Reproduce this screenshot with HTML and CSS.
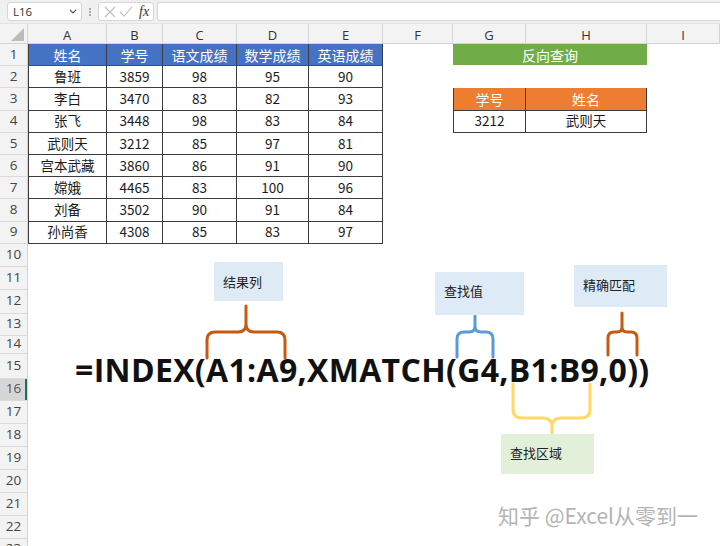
FILE: index.html
```html
<!DOCTYPE html>
<html lang="zh-CN">
<head>
<meta charset="utf-8">
<title>INDEX XMATCH 反向查询</title>
<link rel="stylesheet" href="styles.css">
</head>
<body>
<div class="app">
  <div class="toolbar">
    <div class="namebox">
      <span class="ref">L16</span>
      <svg class="chev" width="8" height="5" viewBox="0 0 8 5"><path d="M1 1 L4 4 L7 1" fill="none" stroke="#555" stroke-width="1.1"/></svg>
    </div>
    <svg class="grip" width="4" height="10" viewBox="0 0 4 10"><circle cx="2" cy="2" r="0.9" fill="#888"/><circle cx="2" cy="5" r="0.9" fill="#888"/><circle cx="2" cy="8" r="0.9" fill="#888"/></svg>
    <div class="fbtns">
      <svg width="12" height="12" viewBox="0 0 12 12"><path d="M1 1 L11 11 M11 1 L1 11" stroke="#bdbdbd" stroke-width="1.1" fill="none"/></svg>
      <svg width="14" height="12" viewBox="0 0 14 12"><path d="M1 6 L5 10 L13 1" stroke="#bdbdbd" stroke-width="1.1" fill="none"/></svg>
      <span class="fx">fx</span>
    </div>
    <div class="finput"></div>
  </div>

  <div class="sheet">
    <div class="corner"><svg width="14" height="13" viewBox="0 0 14 13"><path d="M13 0 L13 13 L0 13 Z" fill="#bcbcbc"/></svg></div>
    <div class="colheads">
      <div class="ch">A</div><div class="ch">B</div><div class="ch">C</div><div class="ch">D</div><div class="ch">E</div><div class="ch">F</div><div class="ch">G</div><div class="ch">H</div><div class="ch">I</div>
    </div>
    <div class="rowheads">
      <div class="rh">1</div><div class="rh">2</div><div class="rh">3</div><div class="rh">4</div><div class="rh">5</div><div class="rh">6</div><div class="rh">7</div><div class="rh">8</div><div class="rh">9</div><div class="rh">10</div><div class="rh">11</div><div class="rh">12</div><div class="rh">13</div><div class="rh">14</div><div class="rh">15</div><div class="rh sel">16</div><div class="rh">17</div><div class="rh">18</div><div class="rh">19</div><div class="rh">20</div><div class="rh">21</div><div class="rh">22</div><div class="rh">23</div>
    </div>
    <div class="canvas">
      <div class="grid">
        <div class="dt">
          <div class="h">姓名</div><div class="h">学号</div><div class="h">语文成绩</div><div class="h">数学成绩</div><div class="h">英语成绩</div>
          <div>鲁班</div><div>3859</div><div>98</div><div>95</div><div>90</div>
          <div>李白</div><div>3470</div><div>83</div><div>82</div><div>93</div>
          <div>张飞</div><div>3448</div><div>98</div><div>83</div><div>84</div>
          <div>武则天</div><div>3212</div><div>85</div><div>97</div><div>81</div>
          <div>宫本武藏</div><div>3860</div><div>86</div><div>91</div><div>90</div>
          <div>嫦娥</div><div>4465</div><div>83</div><div>100</div><div>96</div>
          <div>刘备</div><div>3502</div><div>90</div><div>91</div><div>84</div>
          <div>孙尚香</div><div>4308</div><div>85</div><div>83</div><div>97</div>
        </div>
        <div class="banner">反向查询</div>
        <div class="lookup">
          <div class="h">学号</div><div class="h">姓名</div>
          <div>3212</div><div>武则天</div>
        </div>
      </div>
    </div>
  </div>

  <svg class="braces" width="720" height="546" viewBox="0 0 720 546">
    <g fill="none" stroke-width="3" stroke-linecap="round" stroke-linejoin="round">
      <path stroke="#c55a11" d="M207 358 V340 Q207 332 215 332 H238 Q246 332 246 324 V306 M285 358 V340 Q285 332 277 332 H254 Q246 332 246 324"/>
      <path stroke="#5b9bd5" d="M457 357 V339 Q457 332 464 332 H469 Q475 332 475 326 V316 M493 357 V339 Q493 332 486 332 H481 Q475 332 475 326"/>
      <path stroke="#c55a11" d="M608 355 V338 Q608 332 614 332 H617 Q622 332 622 327 V313 M637 355 V338 Q637 332 631 332 H627 Q622 332 622 327"/>
      <path stroke="#ffd966" d="M513 384 V409 Q513 418 522 418 H543 Q552 418 552 427 V433 M590 384 V409 Q590 418 581 418 H561 Q552 418 552 427"/>
    </g>
  </svg>

  <div class="formula">=INDEX(A1:A9,XMATCH(G4,B1:B9,0))</div>

  <div class="note blue n1">结果列</div>
  <div class="note blue n2">查找值</div>
  <div class="note blue n3">精确匹配</div>
  <div class="note green n4">查找区域</div>

  <div class="watermark">知乎 @Excel从零到一</div>
</div>
</body>
</html>
```

FILE: styles.css
```css
* { box-sizing: border-box; }
html, body { margin: 0; padding: 0; background: #fff; }
body { font-family: "Noto Sans CJK SC", "Noto Sans", sans-serif; color: #222; }

.app { position: relative; width: 720px; height: 546px; overflow: hidden; background: #fff; }

/* toolbar */
.toolbar {
  height: 24px;
  background: #f0f0f0;
  display: flex;
  align-items: flex-start;
  padding: 2px 0 0 7px;
  border-bottom: 1px solid #e2e2e2;
}
.namebox {
  width: 75px; height: 19px;
  background: #fff;
  border: 1px solid #d6d6d6;
  border-radius: 3px;
  display: flex; align-items: center; justify-content: space-between;
  padding: 0 4px 0 5px;
}
.ref { font-family: "Open Sans", sans-serif; font-size: 11.5px; color: #333; line-height: 1; }
.grip { margin: 5px 0 0 6px; }
.fbtns {
  margin-left: 6px;
  width: 56px; height: 19px;
  background: #fff;
  border: 1px solid #d6d6d6;
  border-radius: 3px;
  display: flex; align-items: center;
  padding: 0 0 0 5px; gap: 3px;
}
.fx { font-family: "Liberation Serif", serif; font-style: italic; font-size: 14px; color: #333; margin-left: 3px; line-height: 1; }
.finput {
  margin-left: 3px;
  flex: 1; height: 19px;
  background: #fff;
  border: 1px solid #d6d6d6;
  border-right: none;
  border-radius: 3px 0 0 3px;
}

/* sheet */
.sheet {
  display: grid;
  grid-template-columns: 28px 1fr;
  grid-template-rows: 20px 1fr;
  height: 522px;
}
.corner {
  background: #f3f3f3;
  border-right: 1px solid #d4d4d4;
  border-bottom: 1px solid #d4d4d4;
  display: flex; align-items: flex-end; justify-content: flex-end;
  padding: 0 2px 2px 0;
}
.colheads {
  display: grid;
  grid-template-columns: 79px 56px 74px 72px 74px 70px 73px 121px 1fr;
  background: #f3f3f3;
  border-bottom: 1px solid #d4d4d4;
}
.ch {
  border-right: 1px solid #d4d4d4;
  display: flex; align-items: center; justify-content: center;
  font-family: "Open Sans", sans-serif; font-size: 13px; color: #333;
  padding-top: 3px;
  line-height: 1;
}
.rowheads {
  display: grid;
  grid-template-rows: repeat(9, 22.2px) 23px 23px 24px 22px 18px 25px 22px repeat(6, 23px) 1fr;
  background: #f3f3f3;
  border-right: 1px solid #d4d4d4;
}
.rh {
  border-bottom: 1px solid #dadada;
  display: flex; align-items: center; justify-content: center;
  font-family: "Open Sans", sans-serif; font-size: 13.5px; color: #444;
  line-height: 1;
}
.rh:last-child { align-items: flex-start; padding-top: 3px; }
.rh.sel { background: #d6d6d6; color: #555; box-shadow: inset -2px 0 0 #217346; }

.canvas { position: relative; }
.grid {
  display: grid;
  grid-template-columns: 79px 56px 74px 72px 74px 70px 73px 121px 1fr;
  grid-template-rows: repeat(9, 22.2px);
}

.dt {
  grid-column: 1 / 6;
  grid-row: 1 / 10;
  display: grid;
  grid-template-columns: 79px 56px 74px 72px 74px;
  grid-template-rows: repeat(9, 1fr);
}
.dt > div, .lookup > div {
  display: flex; align-items: center; justify-content: center;
  font-size: 13.5px; line-height: 1; color: #1a1a1a;
  border-right: 1px solid #3c3c3c;
  border-bottom: 1px solid #3c3c3c;
}
.dt > div:nth-child(5n+1) { border-left: 1px solid #3c3c3c; }
.dt > .h { background: #4472c4; color: #fff; font-size: 14px; border-bottom-color: #2f528f; }

.banner {
  grid-column: 7 / 9;
  grid-row: 1;
  background: #70ad47;
  color: #fff;
  font-size: 14px; line-height: 1;
  display: flex; align-items: center; justify-content: center;
  margin-bottom: 1px;
}
.lookup {
  grid-column: 7 / 9;
  grid-row: 3 / 5;
  display: grid;
  grid-template-columns: 73px 121px;
  grid-template-rows: 1fr 1fr;
}
.lookup > div:nth-child(odd) { border-left: 1px solid #3c3c3c; }
.lookup > .h { background: #ed7d31; color: #fff; font-size: 14px; }

/* overlays */
.braces { position: absolute; left: 0; top: 0; pointer-events: none; }

.formula {
  position: absolute;
  left: 75px; top: 353.5px;
  font-family: "Open Sans", sans-serif;
  font-weight: 700;
  font-size: 32px;
  line-height: 32px;
  letter-spacing: 0.33px;
  color: #111;
  white-space: nowrap;
}

.note {
  position: absolute;
  font-size: 13px; line-height: 1;
  color: #222;
  padding: 0 0 0 9px;
  display: flex; align-items: flex-start;
}
.note.blue { background: #deebf7; }
.note.green { background: #e2f0d9; }
.n1 { left: 214px; top: 262px; width: 69px; height: 39px; padding-top: 13px; }
.n2 { left: 435px; top: 272px; width: 89px; height: 43px; padding-top: 12px; }
.n3 { left: 574px; top: 265px; width: 93px; height: 42px; padding-top: 13px; }
.n4 { left: 501px; top: 434px; width: 93px; height: 40px; padding-top: 12px; }

.watermark {
  position: absolute;
  left: 498px; top: 503px;
  font-size: 21px; line-height: 24px;
  color: #b4b4b4;
  white-space: nowrap;
  text-shadow: 0 0 1px #fff, 1px 1px 0 #fff;
}
```
